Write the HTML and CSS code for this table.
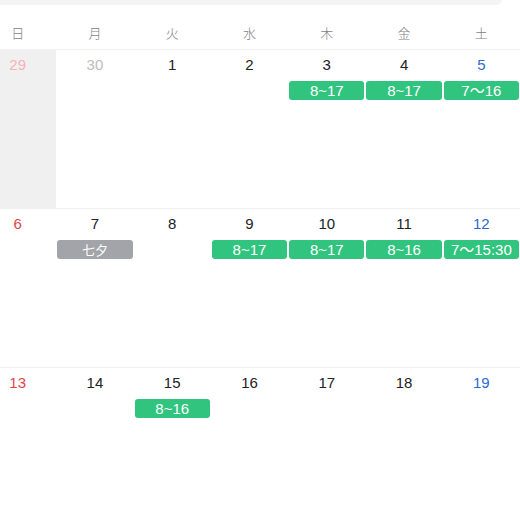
FILE: index.html
```html
<!DOCTYPE html>
<html lang="ja">
<head>
<meta charset="utf-8">
<link rel="stylesheet" href="styles.css">
</head>
<body>
<div class="topbar"></div>
<div class="cal">
  <div class="head">
    <div class="wd">日</div><div class="wd">月</div><div class="wd">火</div><div class="wd">水</div><div class="wd">木</div><div class="wd">金</div><div class="wd">土</div>
  </div>
  <div class="week">
    <div class="day prev"><span class="num sun-prev">29</span></div>
    <div class="day"><span class="num other">30</span></div>
    <div class="day"><span class="num">1</span></div>
    <div class="day"><span class="num">2</span></div>
    <div class="day"><span class="num">3</span><span class="ev">8~17</span></div>
    <div class="day"><span class="num">4</span><span class="ev">8~17</span></div>
    <div class="day"><span class="num sat">5</span><span class="ev">7〜16</span></div>
  </div>
  <div class="week">
    <div class="day"><span class="num sun">6</span></div>
    <div class="day"><span class="num">7</span><span class="ev holiday">七夕</span></div>
    <div class="day"><span class="num">8</span></div>
    <div class="day"><span class="num">9</span><span class="ev">8~17</span></div>
    <div class="day"><span class="num">10</span><span class="ev">8~17</span></div>
    <div class="day"><span class="num">11</span><span class="ev">8~16</span></div>
    <div class="day"><span class="num sat">12</span><span class="ev">7〜15:30</span></div>
  </div>
  <div class="week">
    <div class="day"><span class="num sun">13</span></div>
    <div class="day"><span class="num">14</span></div>
    <div class="day"><span class="num">15</span><span class="ev">8~16</span></div>
    <div class="day"><span class="num">16</span></div>
    <div class="day"><span class="num">17</span></div>
    <div class="day"><span class="num">18</span></div>
    <div class="day"><span class="num sat">19</span></div>
  </div>
</div>
</body>
</html>
```
FILE: styles.css
```css
html, body {
  margin: 0;
  padding: 0;
  background: #ffffff;
  overflow: hidden;
}
body {
  width: 520px;
  height: 520px;
  font-family: "Liberation Sans", "Noto Sans CJK JP", sans-serif;
  color: #333333;
}
.topbar {
  width: 502px;
  height: 5px;
  background: #f4f4f4;
  border-radius: 0 0 8px 0;
}
.cal {
  width: 541px;
  margin-left: -21px;
}
.head {
  display: grid;
  grid-template-columns: repeat(7, 1fr);
  padding-top: 19px;
  height: 25px;
  border-bottom: 1px solid #f1f1f1;
}
.wd {
  text-align: center;
  font-size: 13px;
  line-height: 18px;
  color: #7f7f7f;
  font-family: "Noto Sans CJK JP", sans-serif;
  font-weight: 300;
}
.week {
  display: grid;
  grid-template-columns: repeat(7, 1fr);
  height: 158px;
  border-bottom: 1px solid #f1f1f1;
}
.day {
  display: flex;
  flex-direction: column;
  align-items: stretch;
  padding-top: 5px;
}
.day.prev {
  background: #f0f0f0;
}
.num {
  text-align: center;
  font-size: 15px;
  line-height: 19px;
  height: 19px;
  color: #222222;
}
.num.other { color: #bdbdbd; }
.num.sun { color: #e0444a; }
.num.sun-prev { color: #f6b3b6; }
.num.sat { color: #2a6ad3; }
.ev {
  margin: 7px 1px 0 1px;
  height: 19px;
  line-height: 19px;
  border-radius: 3px;
  background: #30c47e;
  color: #ffffff;
  font-size: 15px;
  text-align: center;
  white-space: nowrap;
  font-family: "Liberation Sans", "Noto Sans CJK JP", sans-serif;
}
.ev.holiday {
  background: #a2a4a9;
  font-family: "Noto Sans CJK JP", sans-serif;
  font-size: 13px;
}
```
